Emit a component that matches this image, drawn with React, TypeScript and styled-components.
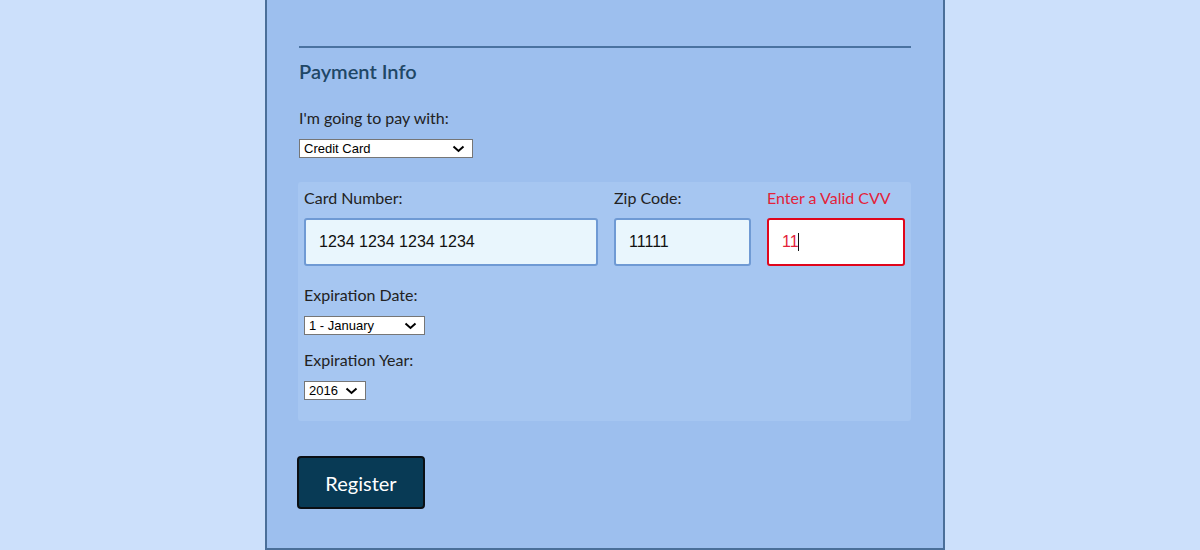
import React from "react";
import styled, { createGlobalStyle } from "styled-components";

const GlobalStyle = createGlobalStyle`
  html, body {
    margin: 0;
    background: #cce0fb;
  }
  body {
    padding-left: 10px;
    font-family: "Lato", "Noto Sans", sans-serif;
  }
`;

const Container = styled.form`
  box-sizing: border-box;
  width: 680px;
  margin: 0 auto;
  padding: 46px 32px 39px;
  background: #9dbfee;
  border: 2px solid #4a6f99;
  border-top: none;
`;

const Rule = styled.hr`
  margin: 0;
  border: none;
  height: 2px;
  background: #4a72a0;
`;

const Heading = styled.h2`
  margin: 11px 0 0;
  font-size: 20px;
  font-weight: 600;
  line-height: 24px;
  color: #1f4766;
`;

const Label = styled.label<{ $error?: boolean }>`
  display: block;
  font-size: 16px;
  line-height: 20px;
  color: ${(p) => (p.$error ? "#e3223a" : "#222")};
`;

const Field = styled.div<{ $top: number }>`
  margin-top: ${(p) => p.$top}px;
`;

const SelectWrap = styled.div<{ $w: number }>`
  position: relative;
  width: ${(p) => p.$w}px;
  margin-top: 11px;
`;

const Select = styled.select`
  display: block;
  box-sizing: border-box;
  width: 100%;
  height: 19px;
  padding: 0 0 0 4px;
  appearance: none;
  font-family: "Liberation Sans", Arial, sans-serif;
  font-size: 13px;
  line-height: 17px;
  color: #000;
  background: #fff;
  border: 1px solid #767676;
  border-radius: 0;
`;

const Chevron = styled.svg`
  position: absolute;
  right: 8px;
  top: 6px;
  width: 13px;
  height: 8px;
  pointer-events: none;
`;

const CardBox = styled.div`
  margin: 24px 0 0 -1px;
  padding: 6px 6px 21px;
  background: #a6c6f1;
  border-radius: 3px;
`;

const Row = styled.div`
  display: flex;
  gap: 16px;
`;

const Column = styled.div<{ $w: number }>`
  width: ${(p) => p.$w}px;
  display: flex;
  flex-direction: column;
  gap: 10px;
`;

const InputWrap = styled.div`
  position: relative;
`;

const Input = styled.input<{ $error?: boolean }>`
  display: block;
  box-sizing: border-box;
  width: 100%;
  height: 48px;
  padding: 0 13px;
  font-family: "Liberation Sans", Arial, sans-serif;
  font-size: 16px;
  color: ${(p) => (p.$error ? "#e3223a" : "#111")};
  caret-color: transparent;
  background: ${(p) => (p.$error ? "#fff" : "#e9f6fd")};
  border: 2px solid ${(p) => (p.$error ? "#e0061c" : "#6f9ad4")};
  border-radius: 3px;
  outline: none;
`;

const Caret = styled.span`
  position: absolute;
  left: 31px;
  top: 15px;
  width: 1px;
  height: 18px;
  background: #111;
  pointer-events: none;
`;

const Button = styled.button`
  display: block;
  margin-top: 35px;
  margin-left: -2px;
  width: 128px;
  height: 53px;
  font-family: "Lato", "Noto Sans", sans-serif;
  font-size: 20px;
  color: #fff;
  background: #083a55;
  border: 2px solid #0a0f14;
  border-radius: 4px;
`;

function Dropdown({
  id,
  width,
  options,
}: {
  id: string;
  width: number;
  options: string[];
}) {
  return (
    <SelectWrap $w={width}>
      <Select id={id} defaultValue={options[0]}>
        {options.map((o) => (
          <option key={o} value={o}>
            {o}
          </option>
        ))}
      </Select>
      <Chevron viewBox="0 0 13 8">
        <path d="M1.5 1.5 L6.5 6 L11.5 1.5" fill="none" stroke="#000" strokeWidth="2" />
      </Chevron>
    </SelectWrap>
  );
}

export default function App() {
  return (
    <>
      <GlobalStyle />
      <Container onSubmit={(e) => e.preventDefault()}>
        <Rule />
        <Heading>Payment Info</Heading>
        <Field $top={25}>
          <Label htmlFor="payment">I'm going to pay with:</Label>
          <Dropdown id="payment" width={174} options={["Credit Card", "PayPal", "Bitcoin"]} />
        </Field>
        <CardBox>
          <Row>
            <Column $w={294}>
              <Label htmlFor="cc">Card Number:</Label>
              <Input id="cc" defaultValue="1234 1234 1234 1234" />
            </Column>
            <Column $w={137}>
              <Label htmlFor="zip">Zip Code:</Label>
              <Input id="zip" defaultValue="11111" />
            </Column>
            <Column $w={138}>
              <Label htmlFor="cvv" $error>
                Enter a Valid CVV
              </Label>
              <InputWrap>
                <Input id="cvv" $error defaultValue="11" />
                <Caret />
              </InputWrap>
            </Column>
          </Row>
          <Field $top={19}>
            <Label htmlFor="month">Expiration Date:</Label>
            <Dropdown id="month" width={121} options={["1 - January", "2 - February", "3 - March"]} />
          </Field>
          <Field $top={15}>
            <Label htmlFor="year">Expiration Year:</Label>
            <Dropdown id="year" width={62} options={["2016", "2017", "2018"]} />
          </Field>
        </CardBox>
        <Button type="submit">Register</Button>
      </Container>
    </>
  );
}
